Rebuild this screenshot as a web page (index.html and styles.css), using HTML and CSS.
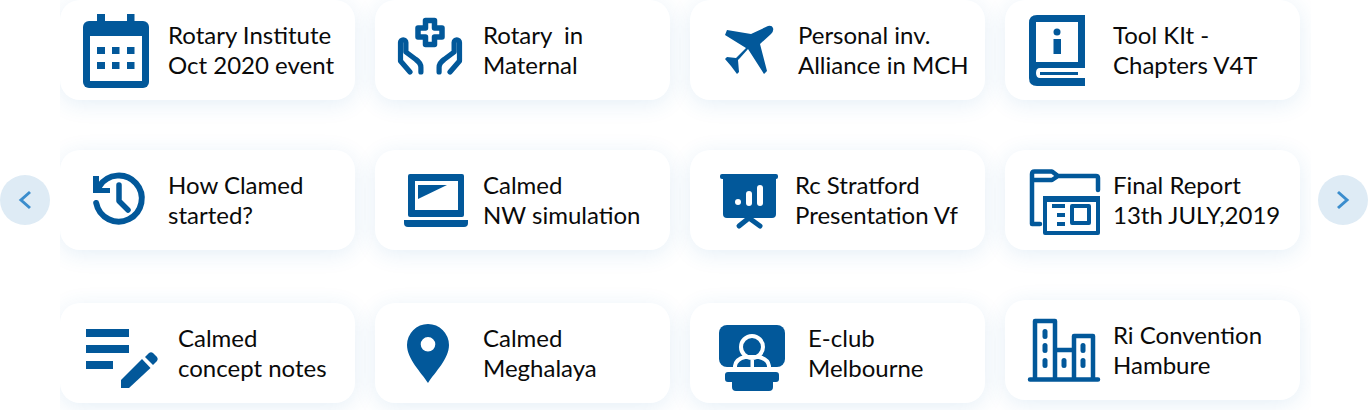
FILE: index.html
```html
<!DOCTYPE html>
<html lang="en">
<head>
  <meta charset="UTF-8">
  <meta name="viewport" content="width=device-width, initial-scale=1.0">
  <title>Resources</title>
  <link rel="stylesheet" href="styles.css">
</head>
<body>
  <div class="slider">
    <button class="arrow arrow-prev" type="button" aria-label="Previous">
      <svg viewBox="0 0 16 22" width="16" height="22"><path d="M13 3 4 11l9 8"/></svg>
    </button>

    <div class="stage">
      <!-- Column 1 -->
      <div class="column">
        <a class="card" href="#">
          <svg class="icon" viewBox="0 0 108 100">
            <rect x="23" y="21" width="66" height="67" rx="6"/>
            <rect x="37" y="14" width="8" height="12"/>
            <rect x="67" y="14" width="7.5" height="12"/>
            <rect class="cut" x="30" y="36" width="52" height="45"/>
            <rect x="37" y="47" width="8" height="7"/>
            <rect x="52" y="47" width="7.5" height="7"/>
            <rect x="67" y="47" width="7.5" height="7"/>
            <rect x="37" y="62" width="8" height="7"/>
            <rect x="52" y="62" width="7.5" height="7"/>
            <rect x="67" y="62" width="7.5" height="7"/>
          </svg>
          <span class="label">Rotary Institute<br>Oct 2020 event</span>
        </a>
        <a class="card" href="#">
          <svg class="icon" viewBox="0 0 108 100">
            <path d="M33 26h6v12h11v5H33z"/>
            <path class="line" stroke-width="6" stroke-linecap="butt" d="M39.500 36A23 23 0 1 1 36.200 53"/>
            <path class="line" stroke-width="5.500" stroke-linecap="butt" d="M59 35v16l9 9"/>
          </svg>
          <span class="label">How Clamed<br>started?</span>
        </a>
        <a class="card card-low" href="#">
          <svg class="icon icon-wide" viewBox="0 0 118 100">
            <rect x="26" y="26" width="43" height="8"/>
            <rect x="26" y="42" width="43" height="8"/>
            <rect x="26" y="58" width="27" height="8"/>
            <path d="M61 77 82 56l8.500 9L69 85h-8z"/>
            <path d="M85 54l4-4q2-1.500 4 0l4 4q1.500 2 0 4l-4 4z"/>
          </svg>
          <span class="label">Calmed<br>concept notes</span>
        </a>
      </div>

      <!-- Column 2 -->
      <div class="column">
        <a class="card" href="#">
          <svg class="icon" viewBox="0 0 108 100">
            <path class="line" stroke-width="5.500" d="M50.500 20.500h9V28h7.500v9h-7.500v7.500h-9V37H43v-9h7.500z"/>
            <path class="line" stroke-width="5.200" d="M35 72 25.500 61V42.500a2.700 2.700 0 0 1 5.400 0V52l10 7.500q5 3.500 5 8V72"/>
            <path class="line" stroke-width="5.200" d="M75 72l9.500-11V42.500a2.700 2.700 0 0 0-5.400 0V52l-10 7.500q-5 3.500-5 8V72"/>
          </svg>
          <span class="label">Rotary &nbsp;in<br>Maternal</span>
        </a>
        <a class="card" href="#">
          <svg class="icon" viewBox="0 0 108 100">
            <rect x="33" y="24" width="56" height="43" rx="2"/>
            <rect class="cut" x="40" y="31" width="43" height="29"/>
            <path d="M43 35h29L43 49z"/>
            <path d="M29 70h64v3q0 4-4 4H33q-4 0-4-4z"/>
          </svg>
          <span class="label">Calmed<br>NW simulation</span>
        </a>
        <a class="card card-low" href="#">
          <svg class="icon" viewBox="0 0 108 100">
            <path fill-rule="evenodd" d="M53 21a21 21 0 0 1 21 21c0 14-14 27-21 38-7-11-21-24-21-38a21 21 0 0 1 21-21zm0 13a7.300 7.300 0 1 0 0 14.600A7.300 7.300 0 0 0 53 34z"/>
          </svg>
          <span class="label">Calmed<br>Meghalaya</span>
        </a>
      </div>

      <!-- Column 3 -->
      <div class="column">
        <a class="card" href="#">
          <svg class="icon" viewBox="0 0 108 100">
            <path d="M78 26q4-1 5 2t-2 6L70 44l7 27-3 3-16-25-8 9-2 2 1 12-2 2-6-8-6-7 2-2 9 1 10-10-21-13 2-5 24 4z"/>
          </svg>
          <span class="label">Personal inv.<br>Alliance in MCH</span>
        </a>
        <a class="card" href="#">
          <svg class="icon icon-narrow" viewBox="0 0 105 100">
            <rect x="30" y="24" width="58" height="5" rx="2"/>
            <path d="M33 28h53v36q0 4-4 4H37q-4 0-4-4z"/>
            <circle class="cut" cx="48" cy="52" r="3"/>
            <rect class="cut" x="56" y="41" width="6" height="15" rx="3"/>
            <rect class="cut" x="67" y="35" width="6" height="21" rx="3"/>
            <path class="line" stroke-width="5" d="M49 76l10-8 11 8"/>
          </svg>
          <span class="label">Rc Stratford<br>Presentation Vf</span>
        </a>
        <a class="card card-low" href="#">
          <svg class="icon icon-wide" viewBox="0 0 118 100">
            <rect x="29" y="22" width="66" height="42" rx="8"/>
            <circle class="cut-line" cx="62" cy="44" r="11" stroke-width="4"/>
            <path class="cut-line" stroke-width="4" d="M45 65v-2q1-7 10-9h14q9 2 10 9v2"/>
            <rect class="cut" x="60.500" y="57" width="3.500" height="7"/>
            <path d="M38 69h48q3 0 3 3v4q0 3-3 3h-3v5q0 4-4 4H46q-4 0-4-4v-5h-4q-3 0-3-3v-4q0-3 3-3z"/>
          </svg>
          <span class="label">E-club<br>Melbourne</span>
        </a>
      </div>

      <!-- Column 4 -->
      <div class="column">
        <a class="card" href="#">
          <svg class="icon" viewBox="0 0 108 100">
            <path d="M80 15H32q-8 0-8 8v55q0 8 8 8h48z"/>
            <rect class="cut" x="31" y="22" width="42" height="40"/>
            <path class="cut" d="M80 68H35q-4 0-4 5t4 5h45z"/>
            <rect x="35" y="72" width="38" height="3"/>
            <circle cx="52" cy="32" r="3.500"/>
            <rect x="48.500" y="39" width="7.500" height="15"/>
          </svg>
          <span class="label">Tool KIt -<br>Chapters V4T</span>
        </a>
        <a class="card" href="#">
          <svg class="icon" viewBox="0 0 108 100">
            <path class="line" stroke-width="4.500" stroke-linecap="butt" d="M35 74H27V24q0-2.500 2.500-2.500H47l6 4.500h38q2 0 2 2v12M27 30h20l6-4"/>
            <rect class="line" stroke-width="4" stroke-linejoin="miter" x="40" y="48" width="53" height="35"/>
            <rect x="38" y="46" width="57" height="6"/>
            <rect x="47" y="54" width="13" height="4"/>
            <rect x="52" y="63" width="8" height="4"/>
            <rect x="52" y="72" width="8" height="4"/>
            <rect class="line" stroke-width="4" stroke-linejoin="miter" x="67" y="56" width="17" height="17"/>
          </svg>
          <span class="label">Final Report<br>13th JULY,2019</span>
        </a>
        <a class="card" href="#">
          <svg class="icon" viewBox="0 0 108 100">
            <path class="line" stroke-width="4.500" d="M25 79.500h68M30 79V21h20v58M50 50h19M69 79V36h19v43"/>
            <rect x="37.500" y="29" width="5" height="10" rx="2.500"/>
            <rect x="37.500" y="43" width="5" height="10" rx="2.500"/>
            <rect x="37.500" y="58" width="5" height="10" rx="2.500"/>
            <rect x="56.500" y="58" width="5" height="10" rx="2.500"/>
            <rect x="75.500" y="43" width="5" height="10" rx="2.500"/>
            <rect x="75.500" y="58" width="5" height="10" rx="2.500"/>
          </svg>
          <span class="label">Ri Convention<br>Hambure</span>
        </a>
      </div>
    </div>

    <button class="arrow arrow-next" type="button" aria-label="Next">
      <svg viewBox="0 0 16 22" width="16" height="22"><path d="M3 3l9 8-9 8"/></svg>
    </button>
  </div>
</body>
</html>
```

FILE: styles.css
```css
body {
  margin: 0;
  background-color: #fff;
  font-family: "Lato", "Open Sans", sans-serif;
  color: #0a0a0a;
}
.slider {
  position: relative;
  width: 1371px;
  height: 410px;
  overflow: hidden;
}
.stage {
  display: flex;
  gap: 20px;
  height: 410px;
  margin: 0 60px;
  overflow: hidden;
}
.column {
  display: flex;
  flex-direction: column;
  gap: 50px;
  width: 295px;
  flex: none;
}
.card {
  display: flex;
  align-items: center;
  height: 100px;
  flex: none;
  background-color: #fff;
  border-radius: 20px;
  box-shadow: 0 4px 22px rgba(40, 120, 190, 0.12);
  text-decoration: none;
  color: inherit;
}
.card-low {
  margin-top: 3px;
}
.label {
  font-size: 24px;
  line-height: 30px;
  white-space: nowrap;
}
.icon {
  width: 108px;
  height: 100px;
  flex: none;
  fill: #02589a;
}
.icon-wide {
  width: 118px;
}
.icon-narrow {
  width: 105px;
}
.icon .cut {
  fill: #fff;
}
.icon .line {
  fill: none;
  stroke: #02589a;
  stroke-linecap: round;
  stroke-linejoin: round;
}
.icon .cut-line {
  fill: none;
  stroke: #fff;
}
.arrow {
  position: absolute;
  top: 175px;
  width: 50px;
  height: 50px;
  padding: 0;
  border: 0;
  border-radius: 50%;
  background-color: #deebf5;
  display: flex;
  align-items: center;
  justify-content: center;
  cursor: pointer;
}
.arrow svg {
  fill: none;
  stroke: #3b8dcd;
  stroke-width: 3;
}
.arrow-prev {
  left: 0;
}
.arrow-next {
  left: 1318px;
}
```
